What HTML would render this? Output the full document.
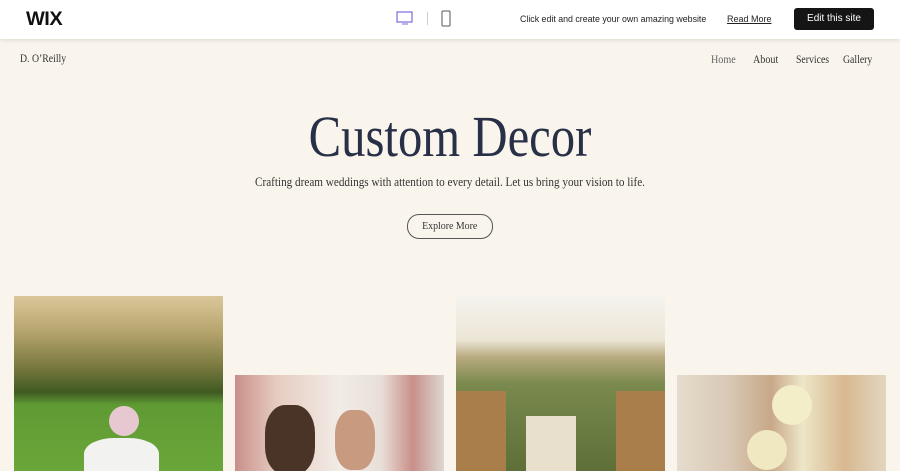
<!DOCTYPE html><html><head><style>
body{margin:0;width:900px;height:471px;overflow:hidden;background:#faf5ec;font-family:"Liberation Serif",serif;position:relative}
.top{position:absolute;left:0;top:0;width:900px;height:39px;background:#fff;box-shadow:0 1px 4px rgba(0,0,0,.12);z-index:2;font-family:"Liberation Sans",sans-serif}
.a{position:absolute}
.img{position:absolute;width:209px;overflow:hidden}
.c{transform:scaleX(.86);transform-origin:center}
</style></head><body>
<div class="top">
<div class="a" style="left:26px;top:9px;font-size:19px;font-weight:bold;letter-spacing:-0.5px;color:#111;transform:scaleX(1.05);transform-origin:left">WIX</div>
<svg class="a" style="left:396px;top:11px" width="18" height="16"><rect x="1" y="1" width="15" height="10" fill="none" stroke="#7a6ae0" stroke-width="1.2"/><path d="M6 13h6" stroke="#7a6ae0"/></svg>
<div class="a" style="left:427px;top:12px;width:1px;height:13px;background:#ccc"></div>
<svg class="a" style="left:441px;top:10px" width="10" height="17"><rect x="1" y="1" width="8" height="15" rx="1" fill="none" stroke="#555"/></svg>
<div class="a" style="left:520px;top:14px;font-size:9px;color:#222;transform:scaleX(.98);transform-origin:left">Click edit and create your own amazing website</div>
<div class="a" style="left:727px;top:14px;font-size:9px;color:#222;text-decoration:underline">Read More</div>
<div class="a" style="left:794px;top:8px;width:80px;height:22px;background:#151515;border-radius:3px;color:#fff;font-size:10px;text-align:center;line-height:22px">Edit this site</div>
</div>
<div class="a" style="left:20px;top:53px;font-size:11.5px;color:#333;transform:scaleX(.85);transform-origin:left">D. O’Reilly</div>
<div class="a" style="left:711px;top:54px;font-size:11.5px;color:#666;transform:scaleX(.88);transform-origin:left">Home</div>
<div class="a" style="left:753px;top:54px;font-size:11.5px;color:#333;transform:scaleX(.88);transform-origin:left">About</div>
<div class="a" style="left:796px;top:54px;font-size:11.5px;color:#333;transform:scaleX(.85);transform-origin:left">Services</div>
<div class="a" style="left:843px;top:54px;font-size:11.5px;color:#333;transform:scaleX(.85);transform-origin:left">Gallery</div>
<div class="a" style="left:0;width:900px;top:103px;text-align:center;font-size:58px;color:#283048;transform:scaleX(.84)">Custom Decor</div>
<div class="a c" style="left:0;width:900px;top:174px;text-align:center;font-size:13px;color:#333">Crafting dream weddings with attention to every detail. Let us bring your vision to life.</div>
<div class="a" style="left:407px;top:214px;width:84px;height:23px;border:1px solid #555;border-radius:12px;text-align:center;line-height:23px;font-size:11px;color:#333"><span style="display:inline-block;transform:scaleX(.9)">Explore More</span></div>
<div class="img" style="left:14px;top:296px;height:175px;background:linear-gradient(180deg,#d9c79a 0%,#b7a56e 20%,#7a7a40 40%,#3f5a22 55%,#5f9a33 62%,#6aa73a 100%)">
<div class="a" style="left:70px;top:142px;width:75px;height:40px;background:#f2f2f0;border-radius:40% 40% 0 0"></div>
<div class="a" style="left:95px;top:110px;width:30px;height:30px;background:#e8c8d0;border-radius:50%"></div></div>
<div class="img" style="left:235px;top:375px;height:96px;background:linear-gradient(90deg,#c98f8a 0%,#e6ccc0 20%,#f1ece6 50%,#e8dfd8 70%,#c98f8a 85%,#dcd8d2 100%)">
<div class="a" style="left:30px;top:30px;width:50px;height:70px;background:#4a3428;border-radius:40%"></div>
<div class="a" style="left:100px;top:35px;width:40px;height:60px;background:#c89a80;border-radius:40%"></div></div>
<div class="img" style="left:456px;top:296px;height:175px;background:linear-gradient(180deg,#f5f3ef 0%,#ece6d6 25%,#b8aa80 35%,#7b8a4e 50%,#6d7f45 70%,#5e7038 100%)">
<div class="a" style="left:70px;top:120px;width:50px;height:55px;background:#e8e0cc"></div>
<div class="a" style="left:0;top:95px;width:50px;height:80px;background:#a97e4a"></div>
<div class="a" style="left:160px;top:95px;width:49px;height:80px;background:#a97e4a"></div></div>
<div class="img" style="left:677px;top:375px;height:96px;background:linear-gradient(90deg,#e6dccd 0%,#d8c8b4 25%,#c8a888 45%,#ede6c8 60%,#d8b890 80%,#e2d6c0 100%)">
<div class="a" style="left:95px;top:10px;width:40px;height:40px;background:#f3edc8;border-radius:50%"></div>
<div class="a" style="left:70px;top:55px;width:40px;height:40px;background:#f0e8c0;border-radius:50%"></div></div>
</body></html>
